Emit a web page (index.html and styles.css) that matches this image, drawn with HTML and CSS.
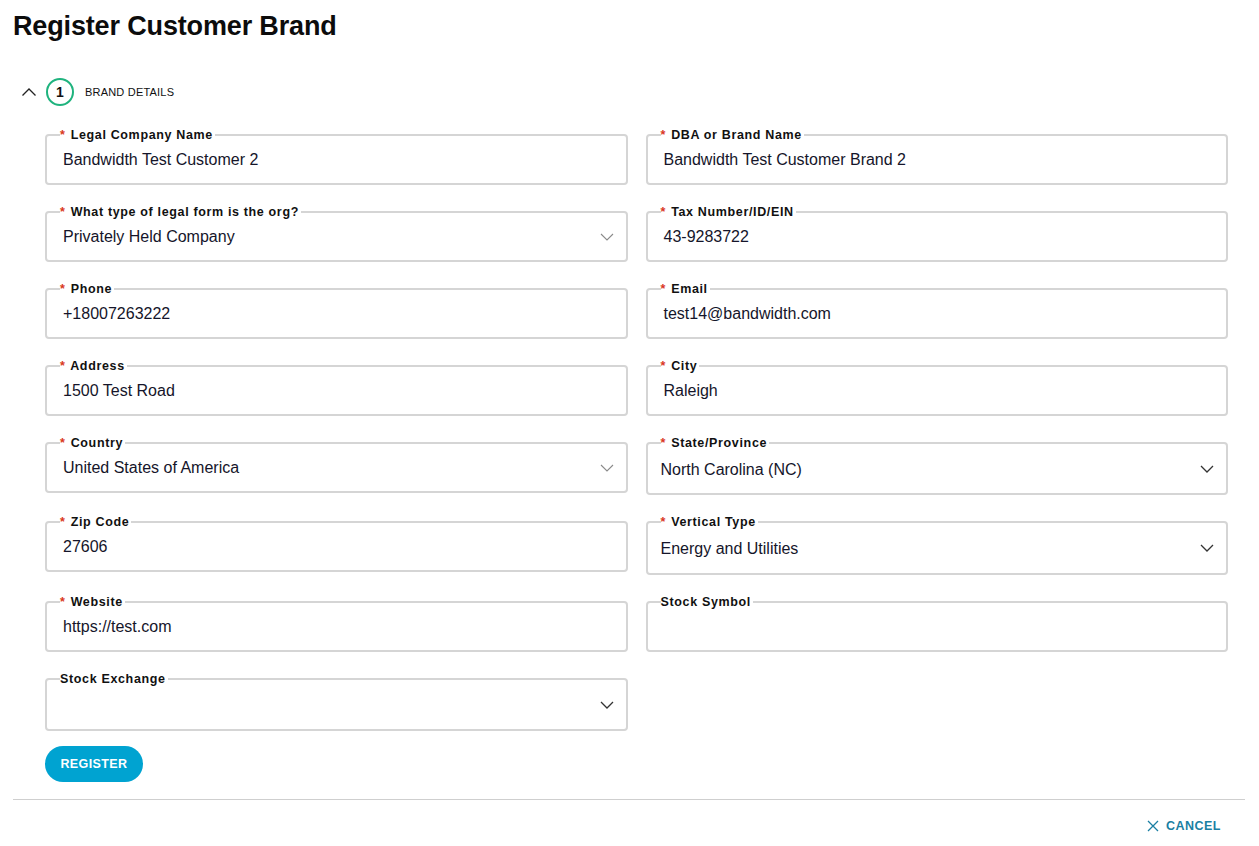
FILE: index.html
```html
<!DOCTYPE html>
<html>
<head>
<meta charset="utf-8">
<link rel="stylesheet" href="styles.css">
</head>
<body>
<div class="page">
  <h1 class="title">Register Customer Brand</h1>
  <div class="step">
    <svg class="step-toggle" width="16" height="10" viewBox="0 0 16 10"><path d="M1.5 8.5 L8 2 L14.5 8.5" fill="none" stroke="#222" stroke-width="1.3"/></svg>
    <span class="step-num">1</span>
    <span class="step-label">BRAND DETAILS</span>
  </div>
  <form class="form">
    <div class="grid">
      <fieldset class="field"><legend><span class="req">*</span> Legal Company Name</legend><div class="value">Bandwidth Test Customer 2</div></fieldset>
      <fieldset class="field"><legend><span class="req">*</span> DBA or Brand Name</legend><div class="value">Bandwidth Test Customer Brand 2</div></fieldset>

      <fieldset class="field select"><legend><span class="req">*</span> What type of legal form is the org?</legend><div class="value">Privately Held Company</div><svg class="chev light" width="14" height="8" viewBox="0 0 14 8"><path d="M1 1 L7 7 L13 1" fill="none" stroke="#8a8a8a" stroke-width="1.1"/></svg></fieldset>
      <fieldset class="field"><legend><span class="req">*</span> Tax Number/ID/EIN</legend><div class="value">43-9283722</div></fieldset>

      <fieldset class="field"><legend><span class="req">*</span> Phone</legend><div class="value">+18007263222</div></fieldset>
      <fieldset class="field"><legend><span class="req">*</span> Email</legend><div class="value">test14@bandwidth.com</div></fieldset>

      <fieldset class="field"><legend><span class="req">*</span> Address</legend><div class="value">1500 Test Road</div></fieldset>
      <fieldset class="field"><legend><span class="req">*</span> City</legend><div class="value">Raleigh</div></fieldset>

      <fieldset class="field select"><legend><span class="req">*</span> Country</legend><div class="value">United States of America</div><svg class="chev light" width="14" height="8" viewBox="0 0 14 8"><path d="M1 1 L7 7 L13 1" fill="none" stroke="#8a8a8a" stroke-width="1.1"/></svg></fieldset>
      <fieldset class="field select tall"><legend><span class="req">*</span> State/Province</legend><div class="value alt">North Carolina (NC)</div><svg class="chev" width="14" height="8" viewBox="0 0 14 8"><path d="M1 1 L7 7 L13 1" fill="none" stroke="#333" stroke-width="1.3"/></svg></fieldset>

      <fieldset class="field"><legend><span class="req">*</span> Zip Code</legend><div class="value">27606</div></fieldset>
      <fieldset class="field select tall taller"><legend><span class="req">*</span> Vertical Type</legend><div class="value alt">Energy and Utilities</div><svg class="chev" width="14" height="8" viewBox="0 0 14 8"><path d="M1 1 L7 7 L13 1" fill="none" stroke="#333" stroke-width="1.3"/></svg></fieldset>

      <fieldset class="field"><legend><span class="req">*</span> Website</legend><div class="value">https://test.com</div></fieldset>
      <fieldset class="field"><legend>Stock Symbol</legend><div class="value"></div></fieldset>

      <fieldset class="field select tall"><legend>Stock Exchange</legend><div class="value"></div><svg class="chev" width="14" height="8" viewBox="0 0 14 8"><path d="M1 1 L7 7 L13 1" fill="none" stroke="#333" stroke-width="1.3"/></svg></fieldset>
    </div>
    <button type="button" class="btn-register">REGISTER</button>
  </form>
  <hr class="sep">
  <div class="footer">
    <button type="button" class="btn-cancel"><svg width="12" height="12" viewBox="0 0 12 12"><path d="M1 1 L11 11 M11 1 L1 11" stroke="#1b7fa3" stroke-width="1.3"/></svg>CANCEL</button>
  </div>
</div>
</body>
</html>
```

FILE: styles.css
```css
* { box-sizing: border-box; }
html, body { margin: 0; padding: 0; background: #fff; }
body {
  font-family: "Liberation Sans", Arial, sans-serif;
  color: #111;
}
.page {
  padding: 8px 14px 0 13px;
}
.title {
  margin: 0;
  font-size: 27px;
  line-height: 36px;
  font-weight: 700;
  color: #0c0c0c;
  letter-spacing: -0.15px;
}
.step {
  display: flex;
  align-items: center;
  margin-top: 34px;
  height: 28px;
}
.step-toggle { margin-left: 8px; }
.step-num {
  width: 28px;
  height: 28px;
  border: 2px solid #1fb37e;
  border-radius: 50%;
  display: flex;
  align-items: center;
  justify-content: center;
  font-size: 14px;
  font-weight: 700;
  margin-left: 9px;
}
.step-label {
  margin-left: 11px;
  font-size: 11px;
  letter-spacing: 0.2px;
  color: #111;
}
.form {
  padding: 22px 17px 0 32px;
}
.grid {
  display: grid;
  grid-template-columns: 1fr 1fr;
  column-gap: 18px;
  row-gap: 20px;
  align-items: start;
}
.field {
  margin: 0;
  border: 2px solid #d5d5d5;
  border-radius: 4px;
  padding: 0 12px 0 13px;
  height: 57px;
  display: flex;
  align-items: center;
  min-width: 0;
}
.field legend {
  padding: 0 2px 0 0;
  font-size: 12.5px;
  font-weight: 700;
  line-height: 14px;
  color: #111;
  letter-spacing: 0.65px;
}
.req { color: #d9381e; font-weight: 700; margin-right: 1px; }
.value {
  flex: 1;
  font-size: 16px;
  color: #15152a;
  padding-left: 3px;
  margin-top: -6px;
}
.value.alt { padding-left: 0; margin-top: -4px; }
.field.tall { height: 59px; }
.field.taller { height: 60px; }
.chev { flex: none; margin-top: -6px; }
.btn-register {
  margin-top: 15px;
  width: 98px;
  height: 36px;
  border: none;
  border-radius: 18px;
  background: #00a3d1;
  color: #fff;
  font-family: "Liberation Sans", Arial, sans-serif;
  font-weight: 700;
  font-size: 12.5px;
  letter-spacing: 0.4px;
  padding: 0;
}
.sep {
  margin: 17px 0 0 0;
  border: none;
  border-top: 1px solid #cfcfcf;
}
.footer {
  display: flex;
  justify-content: flex-end;
  padding: 19px 24px 0 0;
}
.btn-cancel {
  display: flex;
  align-items: center;
  gap: 7px;
  background: none;
  border: none;
  padding: 0;
  color: #1b7fa3;
  font-family: "Liberation Sans", Arial, sans-serif;
  font-weight: 700;
  font-size: 12.5px;
  letter-spacing: 0.5px;
}
```
